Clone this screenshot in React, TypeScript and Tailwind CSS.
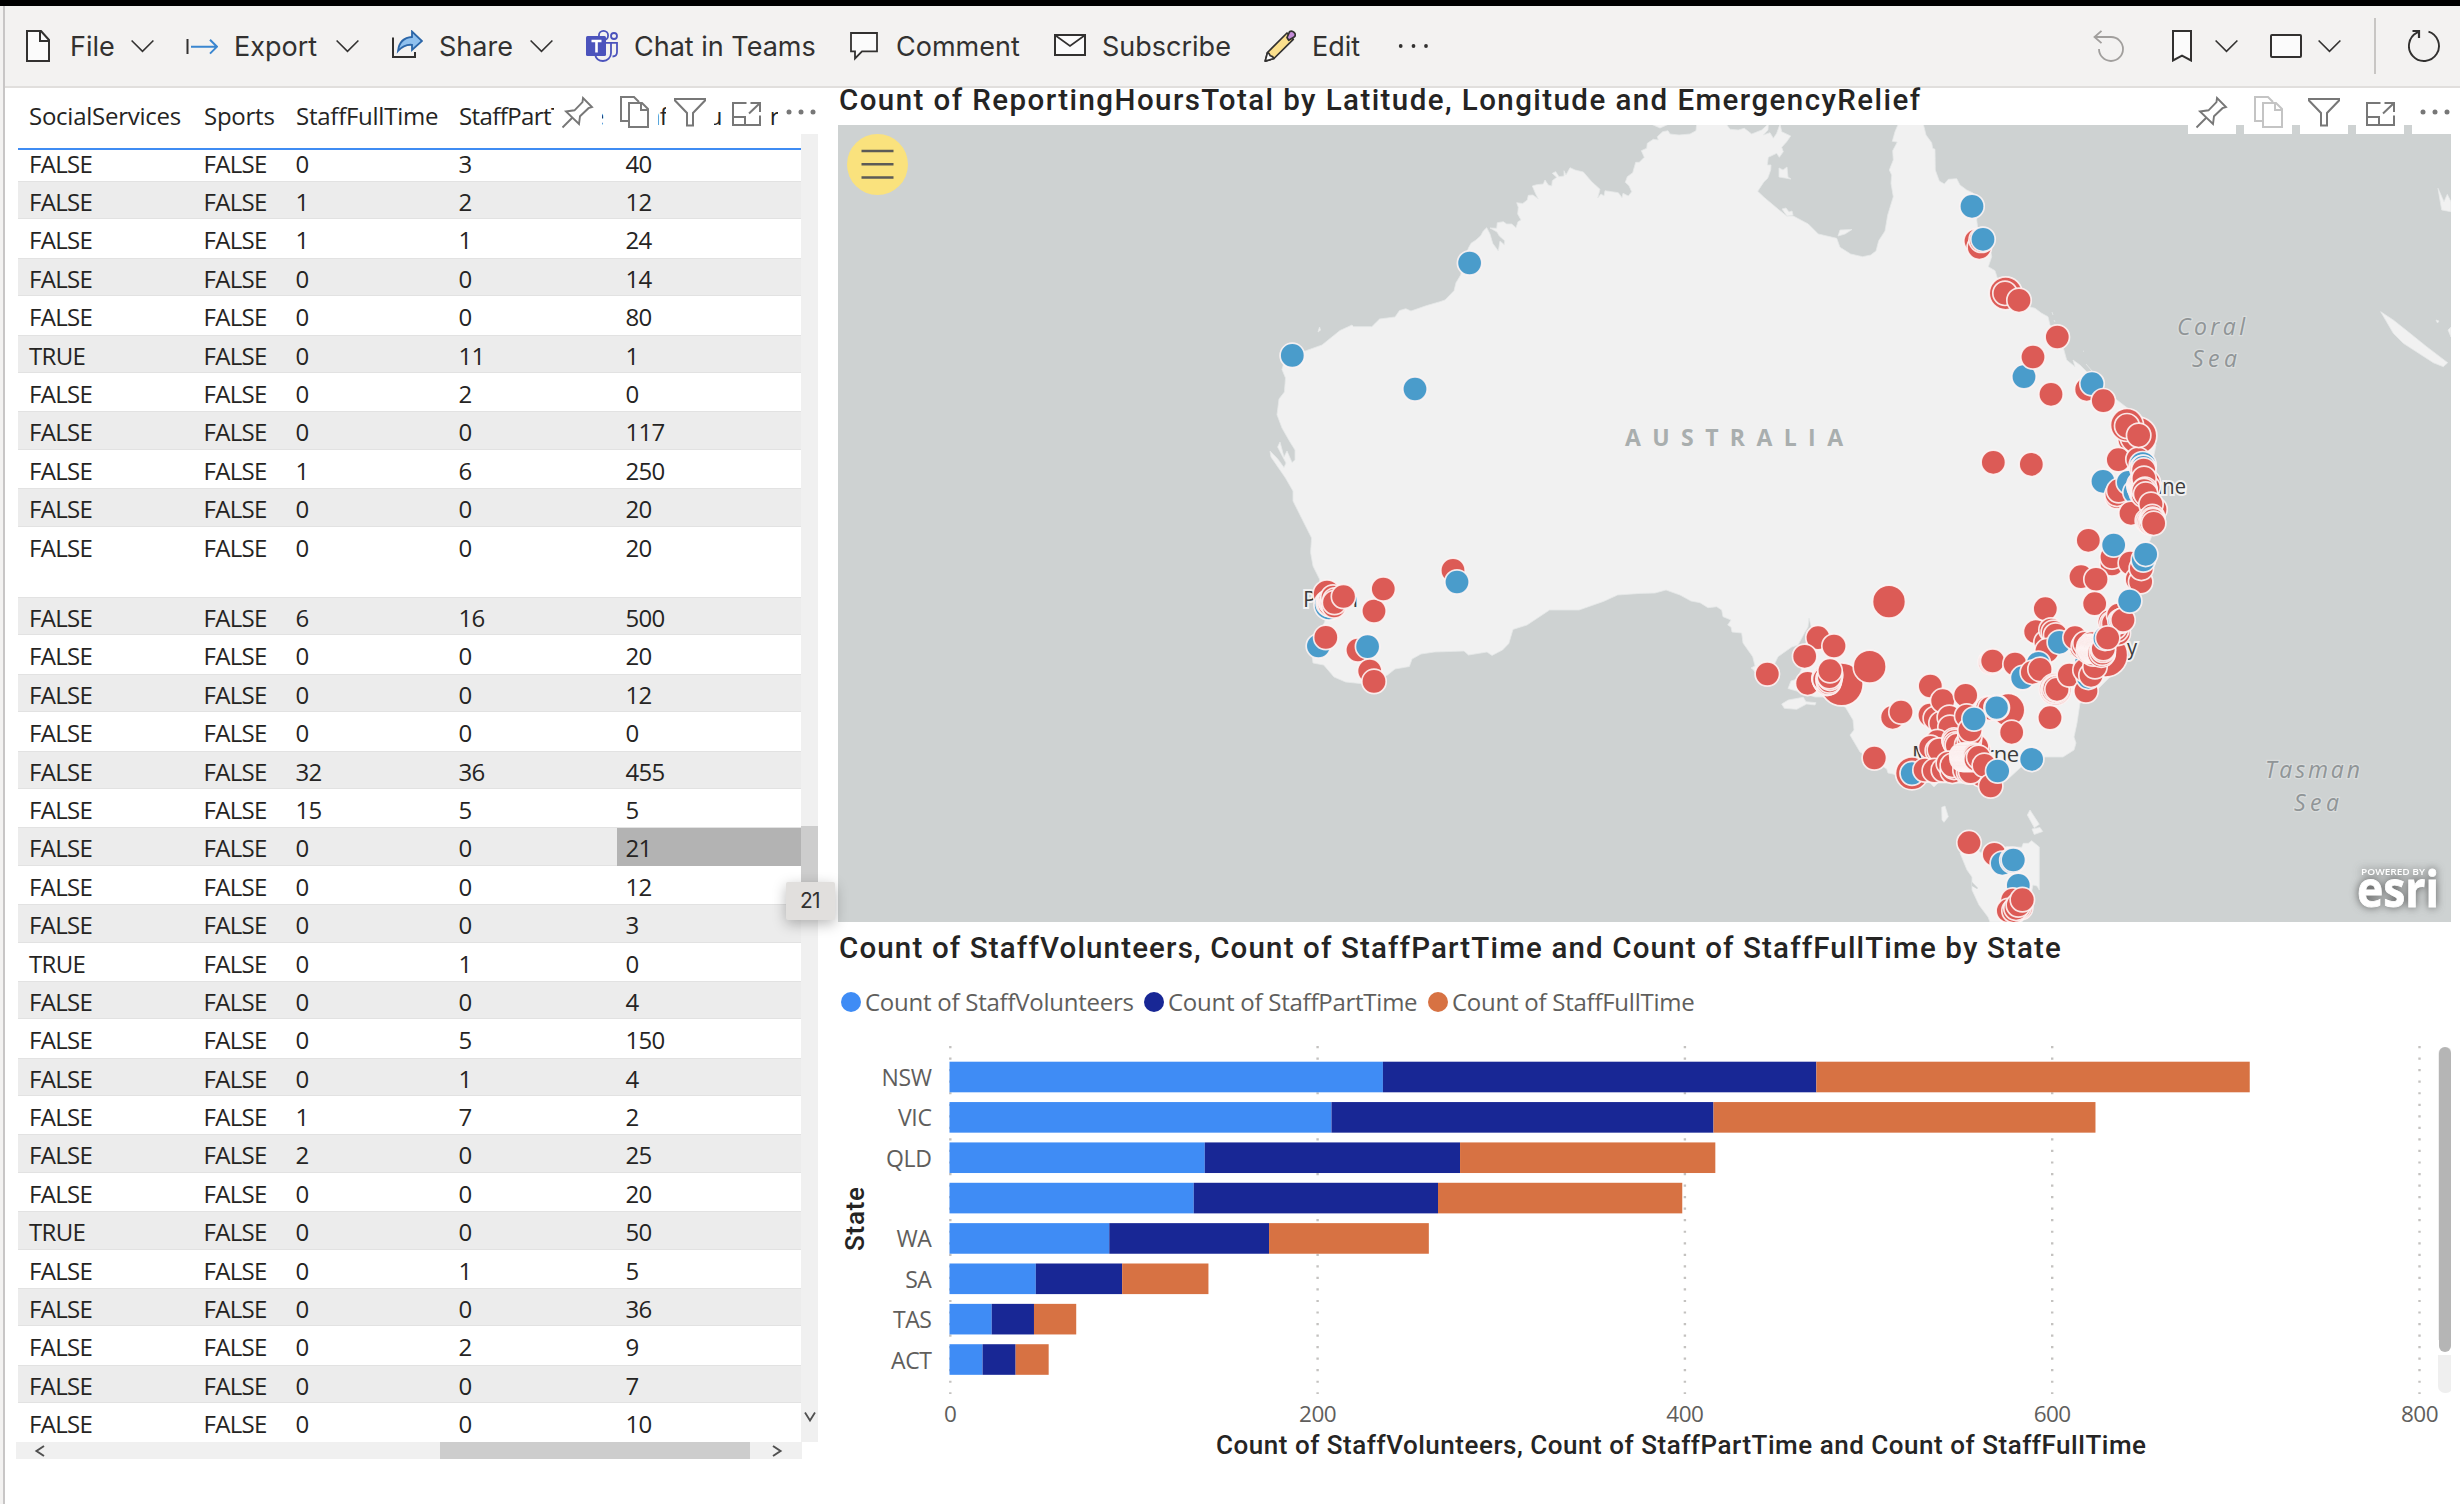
import React from "react";

type Row = [string, string, string, string, string];

const ROWS: Row[] = [
  ["FALSE", "FALSE", "0", "3", "40"],
  ["FALSE", "FALSE", "1", "2", "12"],
  ["FALSE", "FALSE", "1", "1", "24"],
  ["FALSE", "FALSE", "0", "0", "14"],
  ["FALSE", "FALSE", "0", "0", "80"],
  ["TRUE", "FALSE", "0", "11", "1"],
  ["FALSE", "FALSE", "0", "2", "0"],
  ["FALSE", "FALSE", "0", "0", "117"],
  ["FALSE", "FALSE", "1", "6", "250"],
  ["FALSE", "FALSE", "0", "0", "20"],
  ["FALSE", "FALSE", "0", "0", "20"],
  ["FALSE", "FALSE", "6", "16", "500"],
  ["FALSE", "FALSE", "0", "0", "20"],
  ["FALSE", "FALSE", "0", "0", "12"],
  ["FALSE", "FALSE", "0", "0", "0"],
  ["FALSE", "FALSE", "32", "36", "455"],
  ["FALSE", "FALSE", "15", "5", "5"],
  ["FALSE", "FALSE", "0", "0", "21"],
  ["FALSE", "FALSE", "0", "0", "12"],
  ["FALSE", "FALSE", "0", "0", "3"],
  ["TRUE", "FALSE", "0", "1", "0"],
  ["FALSE", "FALSE", "0", "0", "4"],
  ["FALSE", "FALSE", "0", "5", "150"],
  ["FALSE", "FALSE", "0", "1", "4"],
  ["FALSE", "FALSE", "1", "7", "2"],
  ["FALSE", "FALSE", "2", "0", "25"],
  ["FALSE", "FALSE", "0", "0", "20"],
  ["TRUE", "FALSE", "0", "0", "50"],
  ["FALSE", "FALSE", "0", "1", "5"],
  ["FALSE", "FALSE", "0", "0", "36"],
  ["FALSE", "FALSE", "0", "2", "9"],
  ["FALSE", "FALSE", "0", "0", "7"],
  ["FALSE", "FALSE", "0", "0", "10"],
];

const TALL_ROW = 10;
const SELECTED_ROW = 17;

/* ---------- toolbar icons ---------- */

const INK = "#323130";

function Chevron() {
  return (
    <svg className="h-8 w-[23px] shrink-0" viewBox="0 0 23 32" fill="none" stroke={INK} strokeWidth="1.6">
      <path d="M.6 10.5 11.5 21.3 22.4 10.5" />
    </svg>
  );
}

function FileIcon() {
  return (
    <svg className="h-8 w-6 shrink-0" viewBox="0 0 24 32" fill="#fbfbfb" stroke={INK} strokeWidth="2">
      <path d="M1 1h14l8 9v21H1z" />
      <path d="M14 1v10h9" fill="none" />
    </svg>
  );
}

function ExportIcon() {
  return (
    <svg className="h-8 w-8 shrink-0" viewBox="0 0 32 32" fill="none">
      <path d="M1.5 9v15" stroke={INK} strokeWidth="2" />
      <path d="M5 16.7h26M24 9.8l7 6.9-7 6.9" stroke="#3a86d0" strokeWidth="2" />
    </svg>
  );
}

function ShareIcon() {
  return (
    <svg className="h-8 w-8 shrink-0" viewBox="0 0 32 32" fill="none">
      <path d="M2 7.5V27h22v-5" stroke={INK} strokeWidth="2" />
      <path d="M21 7V1.500l10 9.500-10 9v-5.200c-6-.5-10 1.700-14 6.200C8 12.500 12.500 7.500 21 7z" fill="#8fc0ee" stroke="#2b66a8" strokeWidth="1.800" />
    </svg>
  );
}

function TeamsIcon() {
  return (
    <svg className="h-8 w-8 shrink-0" viewBox="0 0 32 32" fill="none" stroke="#4b53bc" strokeWidth="1.800">
      <circle cx="17.500" cy="5.500" r="4.600" fill="#f3f2f1" />
      <circle cx="28" cy="6" r="3" />
      <path d="M22.500 12.800H31V22c0 2.800-2 4.500-4.500 4.500" />
      <path d="M20 12.800h5V23c0 4.500-3.500 8-8 8-4 0-7-2.500-7.800-6" fill="#f3f2f1" />
      <rect x="0" y="6" width="20" height="20" rx="1.500" fill="#4b53bc" stroke="none" />
      <path d="M5.500 11h10M10.500 11v11.500" stroke="#fff" strokeWidth="2.600" />
    </svg>
  );
}

function CommentIcon() {
  return (
    <svg className="h-8 w-7 shrink-0" viewBox="0 0 28 32" fill="#fbfbfb" stroke={INK} strokeWidth="1.800">
      <path d="M1 3h26v18.300H12L5 28.500v-7.200H1z" />
    </svg>
  );
}

function MailIcon() {
  return (
    <svg className="h-8 w-8 shrink-0" viewBox="0 0 32 32" fill="#fbfbfb" stroke={INK} strokeWidth="2">
      <path d="M1 5h30v20H1z" />
      <path d="M1.500 5.500 16 16 30.500 5.500" fill="none" strokeWidth="1.700" />
    </svg>
  );
}

function PencilIcon() {
  return (
    <svg className="h-8 w-8 shrink-0" viewBox="0 0 32 32" stroke={INK} strokeWidth="1.700" strokeLinejoin="round">
      <path d="M3.500 22.500 23 3l6.300 6.300L10 28.500l-8.800 2.600z" fill="#fbe08d" />
      <path d="m3.500 22.500 1.500 1 1.300 2.300 2.200.8 1.500 1.900-8.800 2.600z" fill="#fff" />
      <path d="M23 7.500 25.500 1.800c3-2.200 7.500 2 5 5l-5.800 3.500z" fill="#c38bd8" />
    </svg>
  );
}

function UndoIcon() {
  return (
    <svg className="h-8 w-8 shrink-0" viewBox="0 0 32 32" fill="none" stroke="#a19f9d" strokeWidth="1.800">
      <path d="M8.500.8 1.500 7l7 6.200M1.500 7H18a12 12 0 1 1-12 12" />
    </svg>
  );
}

function BookmarkIcon() {
  return (
    <svg className="h-8 w-5 shrink-0" viewBox="0 0 20 32" fill="#fbfbfb" stroke={INK} strokeWidth="2">
      <path d="M1 1h18v29.500l-9-4.800-9 4.800z" />
    </svg>
  );
}

function ViewIcon() {
  return (
    <svg className="h-8 w-8 shrink-0" viewBox="0 0 32 32" fill="#fbfbfb" stroke={INK} strokeWidth="2">
      <rect x="1" y="5" width="30" height="22" rx="1" />
    </svg>
  );
}

function RefreshIcon() {
  return (
    <svg className="h-8 w-8 shrink-0" viewBox="0 0 32 32" fill="none" stroke={INK} strokeWidth="1.900">
      <path d="M20.500 1.700A15 15 0 1 1 9 2.700l2.500-1.200" />
      <path d="M4.500 1h6.500v7" strokeWidth="2.200" />
    </svg>
  );
}

function MoreIcon() {
  return (
    <svg className="h-8 w-[31px] shrink-0" viewBox="0 0 31 32" fill={INK}>
      <circle cx="2.700" cy="16" r="1.900" />
      <circle cx="15.500" cy="16" r="1.900" />
      <circle cx="28" cy="16" r="1.900" />
    </svg>
  );
}

function Toolbar() {
  const label = "shrink-0 whitespace-nowrap pt-px font-['Inter'] text-[27px] leading-8";
  return (
    <header className="flex h-[82px] shrink-0 items-start border-b-2 border-[#e1dfdd] bg-[#f3f2f1] pt-6 pl-[21px] pr-5 text-[#323130]">
      <FileIcon />
      <span className={`${label} ml-5 w-[61px]`}>File</span>
      <Chevron />
      <span className="w-8 shrink-0" />
      <ExportIcon />
      <span className={`${label} ml-4 w-[102px]`}>Export</span>
      <Chevron />
      <span className="w-8 shrink-0" />
      <ShareIcon />
      <span className={`${label} ml-4 w-[91px]`}>Share</span>
      <Chevron />
      <span className="w-[33px] shrink-0" />
      <TeamsIcon />
      <span className={`${label} ml-4 w-[216px]`}>Chat in Teams</span>
      <CommentIcon />
      <span className={`${label} ml-[18px] w-[158px]`}>Comment</span>
      <MailIcon />
      <span className={`${label} ml-4 w-[162px]`}>Subscribe</span>
      <PencilIcon />
      <span className={`${label} ml-4 w-[86px]`}>Edit</span>
      <MoreIcon />
      <span className="flex-1" />
      <UndoIcon />
      <span className="w-[47px]" />
      <BookmarkIcon />
      <span className="w-[23px]" />
      <Chevron />
      <span className="w-8" />
      <ViewIcon />
      <span className="w-4" />
      <Chevron />
      <span className="-mt-3 ml-[33px] mr-8 h-14 w-0.5 bg-[#c8c6c4]" />
      <RefreshIcon />
    </header>
  );
}

/* ---------- visual header icons ---------- */

function VisualActions({ dimCopy = false }: { dimCopy?: boolean }) {
  const box = "h-[46px] w-12 shrink-0 bg-white";
  const copyStroke = dimCopy ? "#c4c4c4" : "#7a7a7a";
  return (
    <div className="flex gap-2">
      <svg className={box} viewBox="0 0 48 46" fill="none" stroke="#777" strokeWidth="1.900">
        <path d="M8.500 39.500 19 29M29 10l9 9-3.500 1.200-8.500 8-1 7.800-13-12.500 8.500-1.200 8-8.200z" />
      </svg>
      <svg className={box} viewBox="0 0 48 46" fill="none" stroke={copyStroke} strokeWidth="2">
        <path d="M19 33h-8V9h13l5 5" />
        <path d="M19 15h13l6 6v18H19z" fill="#fff" />
        <path d="M31 15v7h7" />
      </svg>
      <svg className={box} viewBox="0 0 48 46" fill="none" stroke="#777" strokeWidth="2">
        <path d="M9 11h30v1.500L27 25v12.500h-6V25L9 12.500z" />
      </svg>
      <svg className={box} viewBox="0 0 48 46" fill="none" stroke="#777" strokeWidth="2">
        <path d="M24.500 15H11v22h27V27.500M28.500 15H38v9M27 25.500 37.500 15.500M11 29h12v8" />
      </svg>
      <svg className={`${box} -mr-2`} viewBox="0 0 48 46" fill="#777">
        <circle cx="11" cy="24" r="2.500" />
        <circle cx="23" cy="24" r="2.500" />
        <circle cx="35" cy="24" r="2.500" />
      </svg>
    </div>
  );
}

/* ---------- table ---------- */

const COLS = "grid grid-cols-[176px_92px_163px_167.500px_1fr]";

function TableRow({ row, index }: { row: Row; index: number }) {
  const shaded = index % 2 === 1;
  const tone = shaded ? "bg-[#ececec] border-[#e2e2e2]" : "bg-white border-transparent";
  const height = index === 0 ? "h-[31px]" : index === TALL_ROW ? "h-[70.500px]" : "h-[38.400px]";
  return (
    <div className={`${COLS} ${height} ${tone} shrink-0 items-start border-y`}>
      {row.map((cell, i) => (
        <div
          key={i}
          className={`${index === 0 ? "h-[30px] leading-[25px]" : "h-[37.400px] pt-px leading-[38.400px]"} ${
            i === 0 ? "pl-[11px]" : i === 4 ? "pl-[9px]" : "pl-[9.500px]"
          } ${index === SELECTED_ROW && i === 4 ? "bg-[#b3b3b3]" : ""}`}
        >
          {cell}
        </div>
      ))}
    </div>
  );
}

function TablePanel() {
  const heads = ["SocialServices", "Sports", "StaffFullTime", "StaffPartTime", "StaffVolunteer"];
  return (
    <section className="relative w-[833px] shrink-0 bg-white font-['Open_Sans'] text-[24px] tracking-[-0.700px] text-[#252423]">
      <div className="flex">
        <div className="ml-[13px] flex h-[1354px] w-[783px] flex-col">
          <div className={`${COLS} h-[62px] shrink-0 border-b-2 border-[#3f8cf3] pt-2.5`}>
            {heads.map((h, i) => (
              <span
                key={h}
                className={`whitespace-nowrap leading-9 ${i === 0 ? "pl-[11px]" : "pl-2.5"} ${
                  i > 2 ? "tracking-[-0.600px]" : "tracking-[-0.250px]"
                }`}
              >
                {h}
              </span>
            ))}
          </div>
          {ROWS.map((row, i) => (
            <TableRow key={i} row={row} index={i} />
          ))}
        </div>
        <div className="mt-[46px] flex h-[1308px] w-[17px] flex-col items-center justify-between bg-[#f0f0f0]">
          <div className="mt-[692px] h-[60px] w-full bg-[#cdcdcd]" />
          <svg className="mb-[18px] h-[14px] w-3" viewBox="0 0 12 14" fill="none" stroke="#505050" strokeWidth="1.800">
            <path d="M1 2.500 6 10.500 11 2.500" />
          </svg>
        </div>
      </div>
      <div className="ml-[11px] flex h-[17px] w-[786px] items-center bg-[#f0f0f0]">
        <svg className="ml-[18px] h-3 w-3" viewBox="0 0 12 12" fill="none" stroke="#505050" strokeWidth="2">
          <path d="M10 1 2.500 6 10 11" />
        </svg>
        <div className="ml-[394px] h-[17px] w-[310px] bg-[#cdcdcd]" />
        <svg className="ml-[21px] h-3 w-3" viewBox="0 0 12 12" fill="none" stroke="#505050" strokeWidth="2">
          <path d="M2 1 9.500 6 2 11" />
        </svg>
      </div>
      <div className="absolute left-[549px] top-0">
        <VisualActions />
      </div>
      <div className="absolute left-[781px] top-[794px] z-10 flex h-[38px] w-[49px] items-center justify-center rounded-[2px] bg-[#e1dfdd] pr-px font-['Inter'] text-[21px] text-[#323130] shadow-[0_4px_14px_rgba(0,0,0,0.28)]">
        21
      </div>
    </section>
  );
}

/* ---------- map ---------- */

const RED = "#dc5b56";
const BLUE = "#4a9ccb";

type Dot = ["r" | "b", number, number, number?];

/* Sites that sit almost on top of each other, so mostly their outlines show. */
const swarm = (x: number, y: number, spread: number, count: number): Dot[] =>
  Array.from({ length: count }, (_, i): Dot => {
    const d = spread * Math.sqrt((i + 1) / count);
    return [i % 7 === 3 ? "b" : "r", x + d * Math.cos(i * 2.4), y + d * Math.sin(i * 2.4), i % 3 === 0 ? 13 : 12.2];
  });

/* A run of sites marching from one point to another in tiny steps. */
const trail = (x1: number, y1: number, x2: number, y2: number, count: number): Dot[] =>
  Array.from({ length: count }, (_, i): Dot => {
    const t = i / (count - 1);
    return ["r", x1 + (x2 - x1) * t, y1 + (y2 - y1) * t + (i % 2 ? 5 : -5), 12.4];
  });

const WEST: Dot[] = [
  ["b", 1469.6, 263], ["b", 1292.3, 355.4], ["b", 1415, 389], ["r", 1453, 570.4], ["b", 1457, 582],
  ["r", 1374, 611], ["r", 1383.3, 589], ["b", 1318.4, 646], ["r", 1325.8, 637.4], ["r", 1358, 650],
  ["b", 1367.6, 646.6], ["r", 1369.7, 671], ["r", 1374, 681.4],
  ["r", 1327, 594, 14], ["b", 1329, 605, 15],
  ["r", 1329.5, 603, 13.5], ["r", 1330, 602, 13], ["r", 1330.6, 604, 13], ["r", 1331.2, 601, 13], ["r", 1331.8, 603, 12.5], ["r", 1332.4, 602],
  ["r", 1333, 597], ["r", 1334, 606], ["r", 1335, 600], ["r", 1334.5, 602.5], ["r", 1343.5, 596.5],
];

const NORTH_EAST: Dot[] = [
  ["b", 1972, 206.3], ["r", 1976, 241], ["r", 1979.3, 247.3], ["r", 1981.5, 240, 12.5], ["b", 1983, 239.3],
  ["r", 2005.7, 293.3, 16.5], ["r", 2005, 293.3], ["r", 2019, 300.3], ["r", 2057.3, 337], ["b", 2024, 376.7],
  ["r", 2033, 357], ["r", 2051, 394.3], ["r", 2086.7, 389.3], ["b", 2092, 383.7], ["r", 2103.3, 400.7],
];

/* Offsets in thirds of a pixel from (1940, 400). */
const EAST: Dot[] = [
  ["r", 160, 187], ["r", 274, 193], ["r", 570, 120],
  ["r", 595, 107, 18.5], ["r", 561, 75, 16.5], ["r", 561, 78, 12.5], ["r", 535, 179], ["r", 594, 178],
  ["r", 596, 106], ["b", 489, 244], ["r", 531, 290], ["r", 531, 283], ["r", 536, 272], ["b", 565, 247], ["b", 585, 277],
  ["r", 573, 340], ["b", 608, 195, 13.5], ["r", 608, 205, 13], ["b", 610, 202], ["r", 611, 210],
  ["b", 606, 270], ...swarm(610, 262, 16, 8), ["r", 620, 250, 14], ["r", 625, 262, 12],
  ...trail(598, 258, 613, 266, 10),
  ["r", 610, 285], ["r", 612, 235], ["r", 615, 268], ["r", 612, 272], ["r", 617, 282],
  ["r", 645, 328], ["r", 633, 313], ["r", 622, 362], ["r", 626, 365], ["r", 630, 368], ["r", 634, 366], ["r", 637, 350], ["r", 638, 358], ["r", 639, 362], ["r", 641, 370],
  ["r", 445, 421], ["r", 516, 492], ["r", 516, 471], ["b", 521, 435], ["r", 571, 489],
  ["r", 592, 538], ["r", 602, 545], ["r", 604, 505], ["b", 610, 480], ["b", 617, 463],
  ["r", 423, 530], ["r", 468, 538], ["r", 464, 611], ["r", 316, 626], ["r", 287, 695], ["r", 318, 727],
  ["r", 333, 690], ["r", 340, 697], ["r", 347, 705], ["r", 321, 752], ["b", 358, 727],
  ["r", 151, 787], ["r", 155, 785], ["r", 158, 783], ["r", 225, 792], ["b", 295, 790], ["b", 248, 833], ["r", 277, 817],
  ["r", 300, 808], ["r", 346, 868, 16], ["r", 346, 868, 14.500], ["r", 343, 870, 13], ["r", 347, 866, 13], ["r", 351, 868], ["r", 430, 812],
  ["r", 388, 825], ["r", 438, 873], ["r", 497, 765, 22], ["b", 440, 785], ["r", 535, 700], ["r", 530, 690],
  ["r", 425, 742], ["r", 405, 713], ["r", 430, 738], ["r", 435, 730],
  ["b", 445, 832], ["r", 435, 810], ["r", 453, 826], ["r", 465, 800],
  ...swarm(464, 745, 18, 10), ...trail(448, 745, 486, 752, 26),
  ["r", 484, 760, 14], ["r", 487, 757, 13], ["r", 489, 750, 12.500], ["r", 490, 746],
  ["b", 495, 715], ["r", 510, 665], ["r", 516, 670], ["r", 525, 682],
  ["r", 521, 670], ["r", 536, 645], ["b", 540, 664], ["r", 545, 662], ["r", 549, 660], ["b", 569, 603], ["r", 503, 714], ["r", 330, 953],
];

/* Offsets in thirds of a pixel from (1700, 560). */
const SOUTH: Dot[] = [
  ["r", 567, 125, 16.5], ["r", 354, 233], ["r", 402, 258], ["r", 314, 289], ["r", 202, 342],
  ["r", 323, 370], ["r", 425, 373, 21.5], ["r", 509, 320, 16.5], ["r", 372, 355], ["r", 374, 361], ["r", 377, 365], ["r", 381, 370], ["r", 374, 358],
  ["r", 384, 357], ["r", 386, 368], ["r", 388, 363], ["r", 390, 355], ["r", 392, 345], ["r", 388, 350], ["r", 390, 332],
  ["r", 691, 378], ["r", 578, 472], ["r", 603, 456], ["r", 690, 465], ["r", 706, 475], ["r", 723, 490],
  ["r", 728, 422], ["r", 797, 406], ["r", 748, 472], ["r", 750, 502], ["r", 800, 468],
  ["r", 925, 450, 16.5], ["r", 863, 445], ["r", 870, 445], ["b", 890, 443, 12.8], ["b", 890, 443, 12], ["r", 935, 517],
  ["r", 523, 594], ["r", 636, 640, 16.5], ["b", 636, 640, 12],
  ["r", 712, 545], ["r", 692, 562], ["r", 735, 600], ["r", 712, 572], ["r", 718, 570], ["r", 675, 630], ["r", 703, 632], ["r", 730, 630],
  ["r", 835, 570], ["r", 830, 560], ["r", 762, 540], ["r", 764, 545], ["r", 767, 552], ["r", 772, 556], ["r", 745, 610], ["r", 757, 634], ["r", 762, 622],
  ["r", 800, 555], ["r", 808, 540], ["r", 810, 525], ["r", 810, 510], ["b", 822, 477],
  ...swarm(794, 605, 18, 12), ["r", 757, 616],
  ["r", 797, 618], ["r", 795, 630], ["r", 806, 636],
  ["r", 845, 645], ["r", 812, 635], ...trail(786, 592, 826, 592, 28), ["r", 826, 590], ["r", 828, 598], ["r", 836, 592], ["r", 853, 616],
  ["r", 872, 678], ["b", 893, 633], ["b", 995, 598],
  ["r", 807, 848], ["r", 883, 883], ["b", 907, 910], ["b", 938, 901, 13], ["b", 940, 900], ["b", 955, 976],
  ["r", 938, 1020], ["r", 925, 1052], ["r", 962, 1043], ["r", 942, 1052], ["r", 957, 1042], ["r", 948, 1045], ["r", 955, 1035], ["r", 967, 1019],
];

const place = (dots: Dot[], ox: number, oy: number): Dot[] =>
  dots.map(([c, x, y, r]) => [c, ox + x / 3, oy + y / 3, r]);

const DOTS: Dot[] = [...WEST, ...NORTH_EAST, ...place(EAST, 1940, 400), ...place(SOUTH, 1700, 560)];

const MAINLAND =
  "M1440 301.700 1445 300 1454 290.700 1456 282.700 1460.700 275 1464 262 1468.300 248.300 1471 243.300 1476 240 1480.700 235.700 1483.300 231 1486.700 227.700 1490 234 1492.700 243.300 1498.300 251 1500 241 1504.300 244.700 1504.700 240.700 1499.300 236 1497 232 1490 228 1496.700 228.300 1497.300 222.700 1503.300 221.700 1506.700 224 1511.700 224 1516 227.700 1518 221.700 1521 220 1517.700 214 1518.300 207.300 1516.700 202.700 1522.700 203.500 1527.300 200 1528.300 195.300 1533 195 1538.300 199 1535.700 194 1532.300 186 1536.700 184.700 1543.300 184 1545 180 1548.300 185 1551.700 186 1552.300 180.700 1556.700 177.300 1552.300 173.300 1555.700 171.700 1559 176.700 1564 176 1564 170.700 1566 175 1570 167.700 1575 170 1583.300 172 1591.700 181.700 1600 189.300 1597.700 198 1601 194 1604 196 1605 190.700 1618.300 192.700 1622 197.700 1623 193.300 1628.300 196 1631.700 191.700 1629 185.700 1625.300 182.300 1627.300 176.700 1632.700 172.700 1635.700 162.300 1639.300 162.300 1644.300 157.300 1641.300 150.700 1646.700 148.300 1647.300 143.300 1653.300 139.300 1658.300 140 1657.300 136.700 1662.700 131.700 1668 130.700 1670 134 1679 135 1690 134 1696 130.700 1697 120 1723.300 120 1730 129.300 1738.300 130 1744.300 128.300 1751.700 134 1761.700 130 1768.300 124 1768 130 1763.300 135 1770 132.700 1773.300 138.300 1776.700 133.300 1780 124 1781.700 131.700 1790.700 136 1786.700 141.700 1781.700 147.300 1783.300 151.700 1779.300 157.300 1776.700 153.300 1768.300 157.300 1767.300 165 1771 165 1770.700 170 1767.700 178.300 1764 181.700 1757.700 191.300 1764 197.300 1778.300 209.300 1786.700 216 1793.300 216 1808.300 224 1818.300 234 1836.700 238.300 1840 247.300 1850.700 254 1862.700 256.700 1870.700 255 1876 251 1878.700 240.700 1885 231 1887.700 215 1893.300 196.700 1891 183.300 1891.700 175 1889.300 170 1893.300 160 1892.700 150.700 1897.300 142 1892.300 141.300 1895 131.700 1900 120 1922.300 120 1926 135 1931.700 142.700 1932.700 148.300 1935 149.300 1935.300 170 1939.300 181 1944.300 184 1948.300 179.300 1956.700 178.700 1960 185 1966.700 190 1973 193 1979 205 1976.700 220 1978 230 1990 246.700 1991.700 256.700 1988.300 266.700 1995 270.700 1998 280 2023 305 2035 308.300 2041.700 313.300 2048 316.700 2050 325 2060 334 2063 346.700 2066.700 360 2075 366.700 2073 360 2080 365 2088 373 2103 390 2117 400 2130 410 2148 425 2156 445 2152 465 2158 500 2164 520 2153 533 2149 543 2149 560 2140 597 2133 615 2125 645 2112 675 2097 690 2087 700 2080 703 2077 723 2074 737 2076 743 2074 750 2063 757 2040 757 2020 768 2007 780 1990 782 1975 784 1953 783 1938 783 1934 787 1930 783 1917 778 1900 777 1893 774 1888 773 1886.700 769 1873 760 1860 752 1850 735 1854 730 1853 720 1845.700 707.700 1838 702 1823 697 1815 697 1800 692 1788 688.500 1791 681 1797 679 1802 668 1797 655 1806 643 1812 630 1809 618 1808 627 1805 632 1798 645 1791.700 647 1778 656.700 1775 663 1768 674 1755 672 1752.700 669 1751 668 1755 666 1752.700 656.700 1743 643 1741.700 633 1732 632 1731 627 1727.700 625 1731 620 1723 616.700 1721.700 610 1716.700 606.700 1708 607.700 1700 602.700 1691 601 1680 595 1666 590 1655 593 1640 593.400 1617.600 595 1603.500 601.400 1579 610 1549.600 610 1527 625 1513 629.400 1508.800 643.500 1502.500 650 1492 655.400 1487 652 1468.500 655 1464 651 1434.500 652 1421 654 1412 659 1409.400 666.500 1395 669 1387.500 675 1365 684 1345.600 682 1334 677 1323.700 665 1313 663 1311.600 652 1325 621 1319.500 579 1313 566 1310.600 552.500 1311.600 538 1293 501 1293 491 1285.500 478 1271 457 1270 451 1277.600 458.700 1284 467.500 1286 463 1277.600 447 1280 442 1284 457 1287 451 1292 462.500 1295 460 1295 450 1289.700 441.500 1282 428 1277 414.700 1279 399 1284.400 392 1285.500 378 1282 369.500 1284 362 1303.800 351.500 1322 345 1340 330.500 1352 325 1353.500 326.700 1371.800 326.700 1379.600 319 1395 317 1399.500 310.600 1405.800 308.700 1411 311 1426.700 305.600z";

const HALO = { stroke: "#d9dcdc", strokeWidth: 2.5, paintOrder: "stroke" } as const;
const LAND_HALO = { stroke: "#f1f1f1", strokeWidth: 4, paintOrder: "stroke" } as const;

function MapVisual() {
  return (
    <svg className="block h-[797px] w-[1613px]" viewBox="838 125 1613 797">
      <rect x="838" y="125" width="1613" height="797" fill="#ced2d2" />
      <g fill="#f1f1f1" stroke="#e6e8e8" strokeWidth=".8" strokeLinejoin="round">
        <path d={MAINLAND} />
        {/* Melville, Groote Eylandt and Mornington */}
        <path d="M1651 124h18l-9 4zM1779 168l4 2 4-3 1 10 3 2-12-2zM1840 230l12-.5-7 4.500-7 2zM1318 332l1.500-5 1 3-1 1z" />
        <path d="M1782 209l4-1 3 4 3-1 1 4-6 1z" />
        {/* Kangaroo Island */}
        <path d="M1781.700 704l6.600-4 15-2.700 2.700 4.400 10 1-1 2.300-8.300-1-10 5.300-12.400-1z" />
        {/* King and Flinders islands */}
        <path d="M1941.700 807.300 1945 806l3.300 10.700-4.300 5.600-2-2.300zM2027.300 815l2.700-5 9.300 14.300-5 3.400zM2032 829l8-1.500 2.700 4-8.500 3z" />
        {/* Tasmania */}
        <path d="M1960 853l7 17 5 7v13l7 15 9 12 2 5h32l6-12 5-25 4 1 2.300 4V847l-7.600-6.300-3.400 2.600h-5l-1.600 4-15-.7-23 8-17-12z" />
        {/* New Caledonia and Vanuatu */}
        <path d="M2380.700 311.700l12.600 8.300 16.700 13.300 16.700 13.400 21 16-4.400 4-10-4-30-19.400-10-10zM2438 188.300l6 13.400 3.300-7.400 3.700 7.400v10l-9.300-1.700zM2436 320l3 1-1.500 2zM2448 330l3-3v10z" />
        <path d="M2052 312l1 3M2054 320l1 2M2083 351l1 .5M2086 364l6 7" />
      </g>
      <path d="M1972 882l6 6-1 1-5-3z" fill="#ced2d2" />

      <g fontFamily="'Open Sans', sans-serif">
        <text x="1625" y="446" fontSize="23" fontWeight="700" fill="#a9aeae" textLength="218" {...LAND_HALO}>AUSTRALIA</text>
        <g fontSize="23" fontStyle="italic" fill="#909597" {...HALO}>
          <text x="2177" y="334.500" textLength="68">Coral</text>
          <text x="2192" y="366.500" textLength="45">Sea</text>
          <text x="2265" y="778" textLength="95">Tasman</text>
          <text x="2294" y="810.500" textLength="45">Sea</text>
        </g>
        <g fontSize="22" fill="#3c3c3c" {...LAND_HALO}>
          <text x="1303" y="606.600" textLength="55">Perth</text>
          <text x="2103" y="494.400" textLength="83" lengthAdjust="spacingAndGlyphs">Brisbane</text>
          <text x="2070" y="655" textLength="67" lengthAdjust="spacingAndGlyphs">Sydney</text>
          <text x="1912" y="762" textLength="107">Melbourne</text>
        </g>
      </g>

      <g stroke="#fdf4f4" strokeOpacity=".9" strokeWidth="1.700">
        {DOTS.map(([c, x, y, r = 12.2], i) => (
          <circle key={i} cx={x} cy={y} r={r} fill={c === "r" ? RED : BLUE} />
        ))}
      </g>

      <g fill="#fff" fontFamily="'Open Sans', sans-serif" fontWeight="700" className="drop-shadow-[0_0_4px_rgba(60,60,60,0.8)]">
        <text x="2361" y="875" fontSize="9" fontWeight="600" textLength="64" lengthAdjust="spacingAndGlyphs">POWERED BY</text>
        <text x="2357" y="907" fontSize="50" textLength="82" lengthAdjust="spacingAndGlyphs" stroke="#fff" strokeWidth=".8">esri</text>
      </g>

      <circle cx="877.500" cy="164.500" r="30.500" fill="#fae27d" />
      <path d="M861.500 151h32M861.500 164.200h32M861.500 177.500h32" stroke="#5c5b57" strokeWidth="2.600" />
    </svg>
  );
}

/* ---------- bar chart ---------- */

const SERIES = [
  { name: "Count of StaffVolunteers", fill: "#3f8cf5" },
  { name: "Count of StaffPartTime", fill: "#182795" },
  { name: "Count of StaffFullTime", fill: "#d77243" },
];

const STATES: [string, number][] = [
  ["NSW", 236],
  ["VIC", 208],
  ["QLD", 139],
  ["", 133],
  ["WA", 87],
  ["SA", 47],
  ["TAS", 23],
  ["ACT", 18],
];

const UNIT = 367.3 / 200;
const X0 = 949.5;

function BarChart() {
  return (
    <svg className="block h-[440px] w-[1613px]" viewBox="838 1030 1613 440" fontFamily="'Open Sans', sans-serif">
      {[0, 200, 400, 600, 800].map((v) => (
        <g key={v}>
          <path
            d={`M${X0 + 0.8 + v * UNIT} 1046V1394`}
            stroke="#c4c2c0"
            strokeWidth="2.400"
            strokeDasharray="2.200 9.340"
          />
          <text x={X0 + 0.8 + v * UNIT} y="1421.500" fontSize="22.500" letterSpacing="-.5" textAnchor="middle" fill="#605e5c">
            {v}
          </text>
        </g>
      ))}
      {STATES.map(([name, n], row) => (
        <g key={row}>
          {SERIES.map((s, k) => (
            <rect key={k} x={X0 + k * n * UNIT} y={1061.7 + row * 40.36} width={n * UNIT} height="30.600" fill={s.fill} />
          ))}
          <text x="931.500" y={1085.7 + row * 40.4} fontSize="23" letterSpacing="-.4" textAnchor="end" fill="#605e5c">
            {name}
          </text>
        </g>
      ))}
      <g fontFamily="Roboto, sans-serif" fontWeight="500" fontSize="26" fill="#252423">
        <text transform="translate(863.500 1251) rotate(-90)" textLength="64">State</text>
        <text x="1216" y="1454" textLength="930">
          Count of StaffVolunteers, Count of StaffPartTime and Count of StaffFullTime
        </text>
      </g>
      <rect x="2438" y="1047" width="15" height="346" rx="7" fill="#efefef" />
      <rect x="2438" y="1340" width="15" height="15" fill="#fff" />
      <rect x="2439" y="1047" width="12" height="305" rx="6" fill="#b5b5b5" />
    </svg>
  );
}

export default function App() {
  return (
    <div className="flex h-[1504px] w-[2460px] flex-col overflow-hidden bg-white">
      <div className="h-1.5 shrink-0 bg-black" />
      <div className="flex min-h-0 flex-1">
        <div className="w-[5px] shrink-0 border-r-2 border-[#c8c6c6] bg-[#f3f2f1]" />
        <div className="flex min-w-0 flex-1 flex-col">
          <Toolbar />
          <div className="flex min-h-0 flex-1">
            <TablePanel />
            <main className="flex min-w-0 flex-1 flex-col">
              <section className="relative">
                <h2 className="h-[37px] whitespace-nowrap pl-px font-['Roboto'] text-[29.500px] font-medium leading-[25px] tracking-[1.430px] text-[#252423]">
                  Count of ReportingHoursTotal by Latitude, Longitude and EmergencyRelief
                </h2>
                <MapVisual />
                <div className="absolute left-[1350px] top-0 w-[263px] overflow-hidden">
                  <VisualActions dimCopy />
                </div>
              </section>
              <section>
                <h2 className="mt-2 whitespace-nowrap pl-px font-['Roboto'] text-[29.500px] font-medium leading-9 tracking-[1.150px] text-[#252423]">
                  Count of StaffVolunteers, Count of StaffPartTime and Count of StaffFullTime by State
                </h2>
                <ul className="mt-3 mb-1 flex h-12 items-center pl-[3px] font-['Open_Sans'] text-[24px] tracking-[-0.250px] text-[#605e5c]">
                  {SERIES.map((s, i) => (
                    <li key={s.name} className={`flex items-center ${i === 1 ? "w-[284px]" : "w-[303px]"}`}>
                      <span className="mr-1 size-5 shrink-0 rounded-full" style={{ backgroundColor: s.fill }} />
                      <span className="whitespace-nowrap">{s.name}</span>
                    </li>
                  ))}
                </ul>
                <BarChart />
              </section>
            </main>
          </div>
        </div>
      </div>
    </div>
  );
}
